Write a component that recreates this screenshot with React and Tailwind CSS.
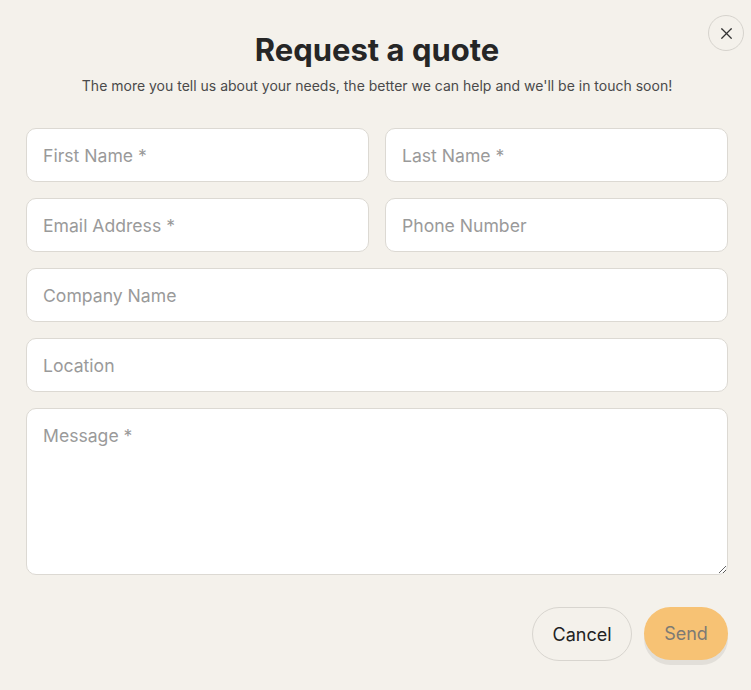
import React from 'react';
import { X } from 'lucide-react';

const inputCls =
  'w-full h-[54px] rounded-[10px] border border-[#dcd9d3] bg-white px-4 text-[17.6px] text-[#222] placeholder:text-[#9a9a9a] outline-none';

const Field = ({ placeholder, className = '' }) => (
  <input type="text" placeholder={placeholder} className={`${inputCls} ${className}`} />
);

export default function App() {
  return (
    <div
      className="min-h-[690px] w-full bg-[#f4f1eb] pl-[26px] pr-[23px]"
      style={{ fontFamily: 'Inter, "Noto Sans", sans-serif' }}
    >
      <div className="relative">
        <button className="absolute right-[-16px] top-[15px] flex h-9 w-9 items-center justify-center rounded-full border border-[#d6d3cd] text-[#333]">
          <X size={19} strokeWidth={1.5} />
        </button>

        <div className="pt-[28px] text-center">
          <h2 className="text-[31px] font-bold leading-[44px] text-[#262626]">Request a quote</h2>
          <p className="mt-[4px] text-[14px] leading-5 text-[#4a4a4a]">
            The more you tell us about your needs, the better we can help and we'll be in touch soon!
          </p>
        </div>

        <form className="mt-[32px] flex flex-col gap-4" onSubmit={(e) => e.preventDefault()}>
          <div className="grid grid-cols-2 gap-4">
            <Field placeholder="First Name *" />
            <Field placeholder="Last Name *" />
          </div>
          <div className="grid grid-cols-2 gap-4">
            <Field placeholder="Email Address *" />
            <Field placeholder="Phone Number" />
          </div>
          <Field placeholder="Company Name" />
          <Field placeholder="Location" />
          <textarea
            placeholder="Message *"
            className="block h-[167px] w-full rounded-[10px] border border-[#dcd9d3] bg-white px-4 py-[14px] text-[17.6px] leading-[26px] text-[#222] placeholder:text-[#9a9a9a] outline-none"
          />

          <div className="mt-[16px] flex justify-end gap-3">
            <button
              type="button"
              className="h-[54px] w-[100px] rounded-full border border-[#d8d5cf] text-[18px] text-[#222]"
            >
              Cancel
            </button>
            <button
              type="submit"
              disabled
              className="h-[53px] w-[84px] rounded-full bg-[#f7c274] text-[18px] text-[#7d7a74] shadow-[0_5px_0_#e2dfd9]"
            >
              Send
            </button>
          </div>
        </form>
      </div>
    </div>
  );
}
